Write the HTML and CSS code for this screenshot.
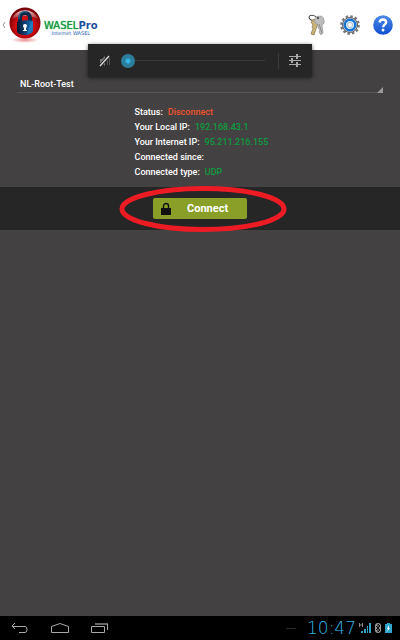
FILE: index.html
```html
<!DOCTYPE html>
<html lang="en">
<head>
  <meta charset="UTF-8" />
  <meta name="viewport" content="width=device-width, initial-scale=1.0"/>
  <title>WASEL Pro</title>
  <link rel="stylesheet" href="styles.css">
</head>
<body>
  <header class="topbar">
    <a class="brand" href="#" aria-label="Back">
      <svg class="back" viewBox="0 0 4 8" width="4" height="8"><path d="M3 1 1 4l2 3" fill="none" stroke="#999"/></svg>
      <svg class="logo" viewBox="0 0 34 36" width="34" height="36">
        <defs>
          <radialGradient id="red" cx=".5" cy=".6" r=".55">
            <stop offset="0" stop-color="#e81c1c"/>
            <stop offset=".6" stop-color="#c80c10"/>
            <stop offset="1" stop-color="#7a0008"/>
          </radialGradient>
          <radialGradient id="shade">
            <stop offset="0" stop-color="#e04040" stop-opacity=".6"/>
            <stop offset="1" stop-color="#e04040" stop-opacity="0"/>
          </radialGradient>
          <linearGradient id="gloss" x2="0" y2="1">
            <stop offset="0" stop-color="#fff" stop-opacity=".8"/>
            <stop offset="1" stop-color="#fff" stop-opacity=".1"/>
          </linearGradient>
          <linearGradient id="lock" x2="1">
            <stop offset="0" stop-color="#06182c"/>
            <stop offset=".5" stop-color="#0b3f78"/>
            <stop offset="1" stop-color="#1c78bc"/>
          </linearGradient>
        </defs>
        <ellipse cx="17" cy="33" rx="14" ry="3" fill="url(#shade)"/>
        <circle cx="17" cy="16" r="15.500" fill="url(#red)"/>
        <path d="M4 12a14 14 0 0 1 26 0c-8-4-18-4-26 0z" fill="url(#gloss)"/>
        <path d="M12 16V11a5 5 0 0 1 10 0v4" fill="none" stroke="#0a2848" stroke-width="4"/>
        <path d="M11 12V10a6 6 0 0 1 8-5" fill="none" stroke="#3c7cac" stroke-width="1"/>
        <path d="M9 15q8-3 16-1v10q-2 4-8 4t-8-3z" fill="url(#lock)"/>
        <path d="M19 28q6-3 6-14-5 5-6 14z" fill="#2b8ccc" opacity=".6"/>
        <circle cx="17" cy="19" r="2" fill="#fff"/>
        <path d="M16 19h2v4h1v1h-4v-1h1z" fill="#fff"/>
      </svg>
      <span class="brand-text">
        <span class="brand-name">WASEL<b>Pro</b></span>
        <span class="brand-sub">Internet WASEL</span>
      </span>
    </a>
    <nav class="actions">
      <button type="button" aria-label="Keys">
        <svg viewBox="0 0 20 22" width="20" height="22">
          <ellipse cx="6" cy="4" rx="4" ry="2.500" fill="none" stroke="#444" transform="rotate(20 6 4)"/>
          <path d="M5 6q5-2 7 2l-2 4-3 9-3-1 1-3 1-2-1-2 1-2q-3-3-1-4z" fill="#c9b478" stroke="#766739" stroke-width=".6"/>
          <path d="M9 3q7-3 8 3 1 4-2 5l1 8-2 2-2-3 1-2-2-2v-3q-6-3-2-8z" fill="#bdbdbd" stroke="#888" stroke-width=".6"/>
          <path d="m12 10 3 9" stroke="#777" stroke-width=".7"/>
          <circle cx="11" cy="4" r="1" fill="#333"/>
        </svg>
      </button>
      <button type="button" aria-label="Settings">
        <svg viewBox="0 0 20 20" width="20" height="20">
          <circle cx="10" cy="10" r="8.600" fill="none" stroke="#777" stroke-width="2.500" stroke-dasharray="2.500 2"/>
          <circle cx="10" cy="10" r="7.500" fill="#ccc" stroke="#666" stroke-width="1"/>
          <circle cx="10" cy="10" r="5.300" fill="#cfe6f8" stroke="#1673d8" stroke-width="2.400"/>
          <circle cx="10" cy="10" r="2.500" fill="#fff" stroke="#a9bfd0"/>
        </svg>
      </button>
      <button type="button" aria-label="Help">
        <svg viewBox="0 0 20 20" width="20" height="20">
          <defs>
            <linearGradient id="help" y2="1" x2="0">
              <stop offset="0" stop-color="#4e8ae8"/>
              <stop offset="1" stop-color="#0f4fd0"/>
            </linearGradient>
          </defs>
          <circle cx="10" cy="10" r="9.800" fill="url(#help)"/>
          <path d="M6.500 7.500Q7 4.500 10 4.500t3.200 2.800c0 2.200-3 2.200-3 5" fill="none" stroke="#fff" stroke-width="2.300"/>
          <circle cx="10" cy="15" r="1.500" fill="#fff"/>
        </svg>
      </button>
    </nav>

    <!-- Volume overlay -->
    <div class="volume">
      <svg viewBox="0 0 12 12" width="12" height="12">
        <path d="M1 4h2l3-3v10L3 8H1z" fill="#777"/>
        <path d="M8.500 3v7M10.500 2v8" stroke="#555"/>
        <path d="M1 11 10 1" stroke="#262626" stroke-width="3"/>
        <path d="M1 11 10 1" stroke="#ddd" stroke-width="1.300"/>
      </svg>
      <input class="volume-range" type="range" min="0" max="15" value="0" aria-label="Volume">
      <button class="volume-more" type="button" aria-label="Sound settings">
        <svg viewBox="0 0 14 14" width="14" height="14" fill="none" stroke="#aaa">
          <path d="M1 2.500h12M1 6.500h12M1 10.500h12"/>
          <path d="M9 0v5M4 4v5M9 8v5" stroke-width="2"/>
        </svg>
      </button>
    </div>
  </header>

  <main>
    <div class="server">
      <select class="server-select" aria-label="Server">
        <option>NL-Root-Test</option>
      </select>
    </div>

    <dl class="info">
      <div><dt>Status:</dt><dd class="off">Disconnect</dd></div>
      <div><dt>Your Local IP:</dt><dd>192.168.43.1</dd></div>
      <div><dt>Your Internet IP:</dt><dd>95.211.216.155</dd></div>
      <div><dt>Connected since:</dt><dd></dd></div>
      <div><dt>Connected type:</dt><dd>UDP</dd></div>
    </dl>

    <div class="connect-bar">
      <button class="connect" type="button">
        <svg viewBox="0 0 10 14" width="10" height="14">
          <path d="M2.500 7V4a2.500 2.500 0 0 1 5 0v3" fill="none" stroke="#111" stroke-width="1.400"/>
          <path d="M0 6h10v7H0z" fill="#111"/>
        </svg>
        <span>Connect</span>
      </button>
      <svg class="ring" viewBox="0 0 168 48" width="168" height="48">
        <ellipse cx="84" cy="24" rx="81" ry="20.500" fill="none" stroke="#ed1c24" stroke-width="5"/>
      </svg>
    </div>
  </main>

  <footer class="navbar">
    <div class="nav-keys">
      <button type="button" aria-label="Back">
        <svg viewBox="0 0 18 12" width="18" height="12"><path d="M4 1 1 4l3 3M1 4.500h13q2 0 2 3t-2 3H8" fill="none" stroke="#aaa"/></svg>
      </button>
      <button type="button" aria-label="Home">
        <svg viewBox="0 0 18 12" width="18" height="12"><path d="M.5 10.500v-6L9 1.500l8.500 3v6z" fill="none" stroke="#aaa"/></svg>
      </button>
      <button type="button" aria-label="Recent apps">
        <svg viewBox="0 0 18 12" width="18" height="12" fill="none"><path d="M.5 4.500h13v6H.5z" stroke="#aaa"/><path d="M4 2h13" stroke="#666" stroke-width="2"/><path d="M16.500 2v6" stroke="#aaa"/></svg>
      </button>
    </div>
    <div class="status">
      <span class="dash"></span>
      <time class="clock">10:47</time>
      <svg viewBox="0 0 12 12" width="12" height="12">
        <path d="M.5 1v4M3.500 1v4M0 3h4" stroke="#888"/>
        <path d="M2 11V9h2v2zM5 11V7h2v4zM8 11V4h1v7zM10 11V1h2v10z" fill="#33a3c8"/>
      </svg>
      <svg viewBox="0 0 8 12" width="8" height="12">
        <rect x="1" y="1" width="6" height="10" rx="3" fill="#999"/>
        <path d="m2 4 4 4-2 2V2l2 2-4 4" fill="none" stroke="#000" stroke-width=".9"/>
      </svg>
      <svg viewBox="0 0 7 12" width="7" height="12">
        <path d="M2 1h3v1h2v9H0V2h2z" fill="#2fa5cd"/>
        <path d="M4 3 2 7h1l-1 3 3-4H4z" fill="#fff"/>
      </svg>
    </div>
  </footer>
</body>
</html>
```
FILE: styles.css
```css
* {
  box-sizing: border-box;
  margin: 0;
  padding: 0;
}
body {
  display: flex;
  flex-direction: column;
  min-height: 100vh;
  font-family: Roboto, sans-serif;
  background: #444142;
  color: #fff;
}
button {
  display: flex;
  align-items: center;
  background: none;
  border: none;
  cursor: pointer;
}
svg {
  flex: none;
  display: block;
}

/* Top bar */
.topbar {
  position: relative;
  display: flex;
  justify-content: space-between;
  align-items: center;
  height: 50px;
  padding: 0 7px 0 2px;
  background: #fff;
}
.brand {
  display: flex;
  align-items: center;
  gap: 2px;
  text-decoration: none;
}
.brand-text {
  display: flex;
  flex-direction: column;
  align-items: center;
  padding-top: 6px;
}
.brand-name {
  font: 10px/11px "DejaVu Sans", sans-serif;
  color: #169a3c;
  text-shadow: 0 0 1px #169a3c;
}
.brand-name b {
  color: #1d4fa0;
  text-shadow: none;
}
.brand-sub {
  font: 5px/5px "DejaVu Sans", sans-serif;
  color: #2860b0;
}
.actions {
  display: flex;
  align-items: center;
  gap: 13px;
}

/* Volume overlay */
.volume {
  position: absolute;
  top: 44px;
  left: 22%;
  right: 22%;
  display: flex;
  align-items: center;
  height: 33px;
  padding: 0 10px 0 11px;
  background: #262626;
  box-shadow: 0 1px 4px rgba(0, 0, 0, 0.6);
}
.volume-range {
  appearance: none;
  flex: 1;
  min-width: 0;
  height: 14px;
  margin: 0 13px 0 10px;
  background: linear-gradient(#3a3a3a, #3a3a3a) center / 100% 1px no-repeat;
}
.volume-range::-webkit-slider-thumb {
  appearance: none;
  width: 14px;
  height: 14px;
  border-radius: 50%;
  background: radial-gradient(circle, #33b5e5 2px, #2d7d9c 3px);
}
.volume-more {
  height: 16px;
  padding-left: 9px;
  border-left: 1px solid #3c3c3c;
}

/* Server picker */
main {
  flex: 1;
  padding-top: 26px;
}
.server {
  position: relative;
  margin: 0 17px;
  border-bottom: 1px solid #5a5758;
}
.server::after {
  content: "";
  position: absolute;
  right: 0;
  bottom: -1px;
  border-left: 6px solid transparent;
  border-bottom: 6px solid #9c9a9b;
}
.server-select {
  appearance: none;
  display: block;
  width: 100%;
  height: 16px;
  padding-left: 3px;
  background: none;
  border: none;
  color: #fff;
  font: 500 9px/16px Roboto, sans-serif;
}

/* Connection info */
.info {
  width: 131px;
  margin: 12px auto 7px;
  font-size: 9px;
  font-weight: 500;
  line-height: 15px;
  white-space: nowrap;
}
.info div {
  display: flex;
  gap: 5px;
}
.info dd {
  color: #0c9c40;
}
.info .off {
  color: #f0532c;
}

/* Connect */
.connect-bar {
  position: relative;
  display: flex;
  justify-content: center;
  padding: 11px 0;
  background: #262626;
}
.connect {
  width: 94px;
  height: 21px;
  padding: 0 8px;
  gap: 16px;
  border-radius: 2px;
  background: #8a9f27;
  color: #fff;
  font: 700 11px/21px Roboto, sans-serif;
}
.ring {
  position: absolute;
  top: 50%;
  left: 50%;
  transform: translate(-50%, -50%);
  margin-left: 3px;
  pointer-events: none;
}

/* System bar */
.navbar {
  display: flex;
  justify-content: space-between;
  align-items: center;
  height: 24px;
  padding: 0 8px 0 11px;
  background: #000;
}
.nav-keys {
  display: flex;
  gap: 22px;
}
.status {
  display: flex;
  align-items: center;
  gap: 3px;
}
.dash {
  width: 10px;
  height: 1px;
  margin-right: 8px;
  background: #2a2a2a;
}
.clock {
  font: 200 17px/24px "DejaVu Sans", sans-serif;
  color: #33b5e5;
}
```
